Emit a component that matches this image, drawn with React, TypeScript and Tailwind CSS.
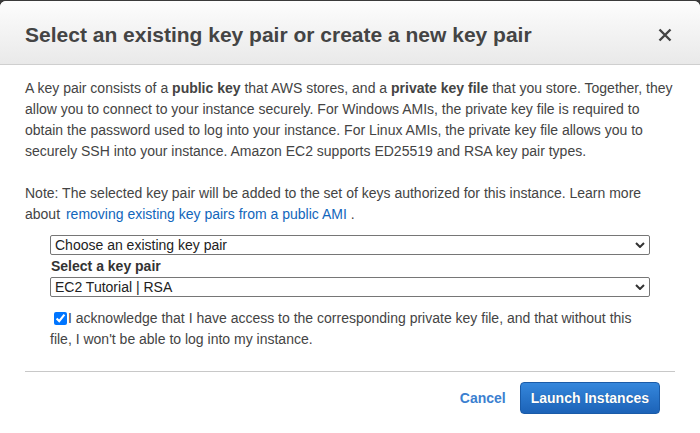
import React from 'react';

const font = { fontFamily: '"Liberation Sans", Arial, sans-serif' };

function Chevron() {
    return (
        <svg
            className="pointer-events-none absolute right-[5px] top-1/2 -translate-y-1/2"
            width="10"
            height="6"
            viewBox="0 0 10 6"
        >
            <path d="M1 1 L5 5 L9 1" fill="none" stroke="#333" strokeWidth="2" />
        </svg>
    );
}

function KeySelect({ value }: { value: string }) {
    return (
        <div className="relative">
            <select
                defaultValue={value}
                className="block h-[20px] w-full appearance-none rounded-[2px] border border-[#767676] bg-white pl-[4px] pr-6 text-[14px] leading-[18px] text-[#222]"
            >
                <option>{value}</option>
            </select>
            <Chevron />
        </div>
    );
}

export default function App() {
    return (
        <div className="h-[433px] w-[700px] overflow-hidden bg-[#3a3a3a] pt-px" style={font}>
            <div className="h-full rounded-t-[6px] bg-white">
                {/* Header */}
                <div className="flex h-[64px] items-center justify-between rounded-t-[6px] border-b border-[#cfcfcf] bg-gradient-to-b from-[#fdfdfd] to-[#e9e9e9] pl-[25px] pr-[28px] pt-[5px]">
                    <h1 className="text-[21px] font-bold text-[#444]">
                        Select an existing key pair or create a new key pair
                    </h1>
                    <svg width="14" height="14" viewBox="0 0 14 14">
                        <path d="M1.5 1.5 L12.5 12.5 M12.5 1.5 L1.5 12.5" stroke="#444" strokeWidth="2.4" />
                    </svg>
                </div>

                {/* Body */}
                <div className="px-[25px] pt-[13px] text-[14px] leading-[21px] text-[#444]">
                    <p>
                        A key pair consists of a <b>public key</b> that AWS stores, and a{' '}
                        <b>private key file</b> that you store. Together, they allow you to connect to
                        your instance securely. For Windows AMIs, the private key file is required to
                        obtain the password used to log into your instance. For Linux AMIs, the private
                        key file allows you to securely SSH into your instance. Amazon EC2 supports
                        ED25519 and RSA key pair types.
                    </p>
                    <p className="mt-[21px]">
                        Note: The selected key pair will be added to the set of keys authorized for this
                        instance. Learn more about{' '}
                        <a href="#" className="ml-[2px] text-[#1166bb]">
                            removing existing key pairs from a public AMI
                        </a>{' '}
                        .
                    </p>

                    <div className="mx-[25px] mt-[10px]">
                        <KeySelect value="Choose an existing key pair" />
                        <div className="pl-px text-[14px] font-bold leading-[22px] text-[#333]">
                            Select a key pair
                        </div>
                        <KeySelect value="EC2 Tutorial | RSA" />
                        <p className="mt-[11px] leading-[21px]">
                            <input
                                type="checkbox"
                                defaultChecked
                                className="ml-[4px] mr-[1px] h-[13px] w-[13px] align-[-2px]"
                            />
                            I acknowledge that I have access to the corresponding private key file, and
                            that without this file, I won't be able to log into my instance.
                        </p>
                    </div>

                    {/* Footer */}
                    <div className="mt-[21px] border-t border-[#c8c8c8]">
                        <div className="flex items-center justify-end gap-[14px] pr-[15px] pt-[10px]">
                            <button className="text-[14px] font-bold text-[#3b7fd0]">Cancel</button>
                            <button className="h-[32px] rounded-[4px] border border-[#1a5ba8] bg-gradient-to-b from-[#3587dc] to-[#1c63b8] px-[10px] text-[14px] font-bold text-white [text-shadow:0_0_1px_rgba(0,0,0,0.3)]">
                                Launch Instances
                            </button>
                        </div>
                    </div>
                </div>
            </div>
        </div>
    );
}
